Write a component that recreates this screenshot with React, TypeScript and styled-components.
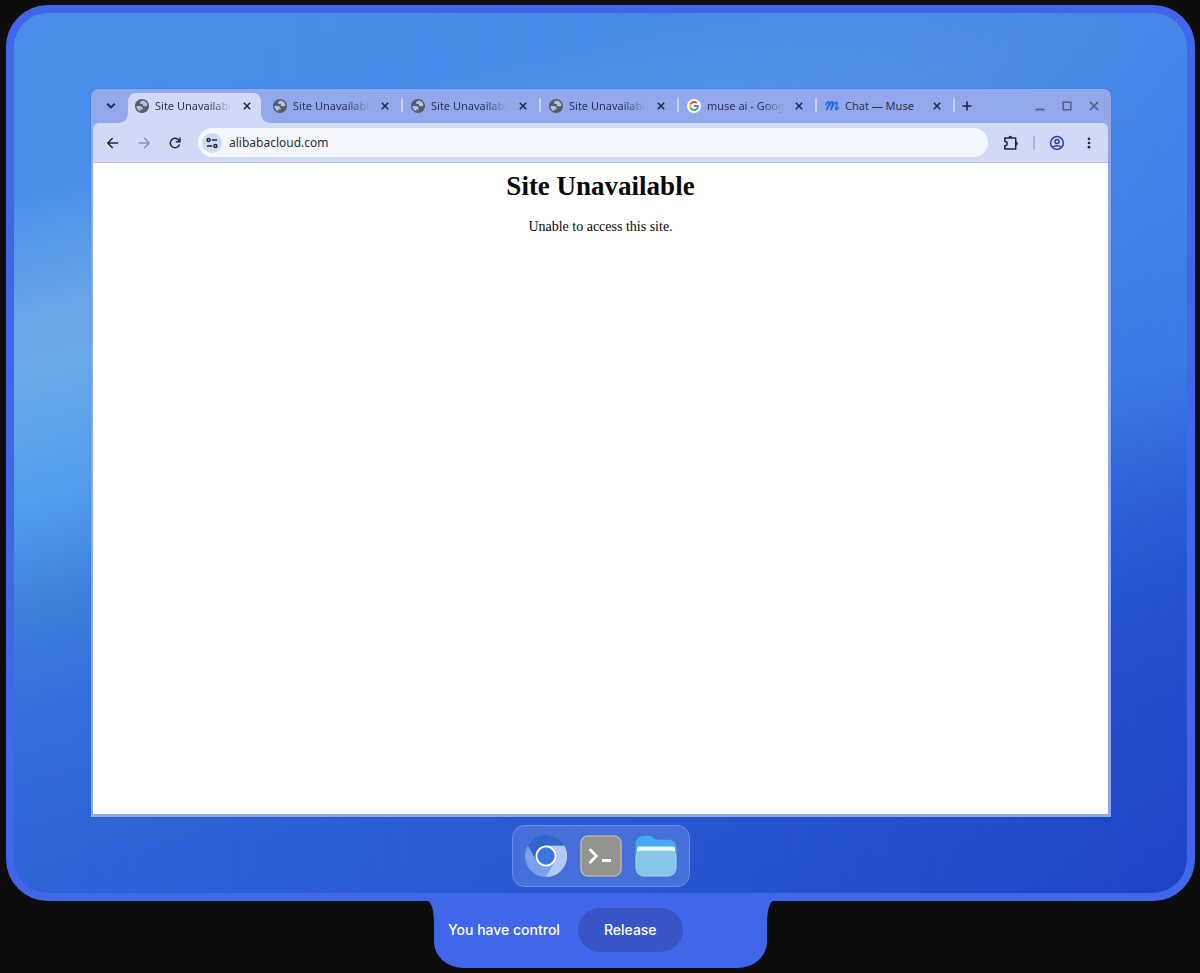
import React from "react";
import styled, { createGlobalStyle, css } from "styled-components";

const GlobalStyle = createGlobalStyle`
  *, *::before, *::after { box-sizing: border-box; }
  body { margin: 0; background: #0d0d0d; }
  button, input { font: inherit; color: inherit; border: 0; padding: 0; margin: 0; background: none; }
  button { cursor: pointer; }
  svg { display: block; flex: none; }
`;

const uiFont = css`
  font-family: "Noto Sans", "Liberation Sans", sans-serif;
`;

const Page = styled.main`
  min-height: 100vh;
  display: flex;
  flex-direction: column;
  padding: 5px 5px 5px 6px;
`;

const Desktop = styled.section`
  flex: 1;
  position: relative;
  isolation: isolate;
  display: flex;
  flex-direction: column;
  align-items: center;
  padding: 76px 76px 6px 77px;
  border: 8px solid #4166ea;
  border-radius: 42px;
  background:
    linear-gradient(
      165deg,
      #4a8ae9 0,
      #4787e8 294px,
      #4280e6 494px,
      #3c7be5 639px,
      #346ede 697px,
      #2c5cd6 784px,
      #2653cf 861px,
      #234dcd 958px,
      #1d44c6 1141px
    ) padding-box,
    linear-gradient(#4166ea, #4166ea) border-box;

  &::before {
    content: "";
    position: absolute;
    inset: 0;
    z-index: -1;
    border-radius: 34px;
    background: linear-gradient(
      165deg,
      #4a8eea 0,
      #478eea 171px,
      #69a7e8 297px,
      #69aae8 355px,
      #54a0ee 461px,
      #4b94e8 510px,
      #3f80dc 577px,
      #336fd9 674px,
      #2d62d6 857px
    );
    mask-image: linear-gradient(to right, #000 0, #000 5%, transparent 100%);
  }
`;

const BrowserWindow = styled.article`
  flex: 1;
  align-self: stretch;
  min-height: 320px;
  display: flex;
  flex-direction: column;
  border: solid #93a8e2;
  border-width: 0 3px 3px 2px;
  border-radius: 7px 7px 0 0;
  background: #93a8ec;
  box-shadow: 0 0 2px rgba(20, 50, 140, 0.25);
  ${uiFont}
`;

const TitleBar = styled.header`
  display: flex;
  align-items: center;
  height: 34px;
  padding: 0 4px 0 8px;
  color: #2b3358;
  font-size: 11px;
`;

const IconButton = styled.button<{ $size: number; $color?: string; $fill?: string }>`
  flex: none;
  width: ${(p) => p.$size}px;
  height: ${(p) => p.$size}px;
  display: flex;
  align-items: center;
  justify-content: center;
  border-radius: 50%;
  color: ${(p) => p.$color ?? "#20263c"};
  background: ${(p) => p.$fill ?? "none"};
`;

const TabList = styled.nav`
  display: flex;
  align-self: stretch;
  padding-left: 7px;
`;

const TabItem = styled.div<{ $active?: boolean; $divided?: boolean }>`
  position: relative;
  width: 138px;
  margin-top: 4px;
  padding: 0 11px 4px 7px;
  display: flex;
  align-items: center;

  ${(p) =>
    p.$active &&
    css`
      &::before {
        content: "";
        position: absolute;
        inset: 0 5px 0 0;
        border-radius: 8px 8px 0 0;
        background: #d0daf7;
      }
      &::after {
        content: "";
        position: absolute;
        bottom: 0;
        left: -8px;
        right: -3px;
        height: 8px;
        background:
          radial-gradient(circle at 0 0, transparent 7px, #d0daf7 8px) left / 8px 8px no-repeat,
          radial-gradient(circle at 100% 0, transparent 7px, #d0daf7 8px) right / 8px 8px no-repeat;
      }
    `}

  ${(p) =>
    p.$divided &&
    css`
      &::after {
        content: "";
        position: absolute;
        right: 1px;
        top: 5px;
        width: 2px;
        height: 14px;
        border-radius: 1px;
        background: #c9d5f8;
      }
    `}
`;

const TabLink = styled.a`
  position: relative;
  z-index: 1;
  flex: 1;
  min-width: 0;
  display: flex;
  align-items: center;
  gap: 6px;
  color: inherit;
  text-decoration: none;
`;

const TabTitle = styled.span<{ $fade: boolean }>`
  flex: 1;
  overflow: hidden;
  white-space: nowrap;
  line-height: 18px;
  margin-right: 7px;
  ${(p) => p.$fade && "mask-image: linear-gradient(to right, #000 72%, transparent 100%);"}
`;

const TabClose = styled(IconButton)`
  position: relative;
  z-index: 1;
`;

const WindowControls = styled.div`
  margin-left: auto;
  display: flex;
  gap: 7px;
`;

const Toolbar = styled.form`
  display: flex;
  align-items: center;
  height: 40px;
  padding: 0 9px 0 10px;
  border-bottom: 1px solid #b4c0e0;
  border-radius: 6px 6px 0 0;
  background: #d0daf7;
`;

const NavButtons = styled.div`
  display: flex;
  gap: 11px;
  padding-right: 13px;
`;

const AddressBar = styled.label`
  flex: 1;
  min-width: 0;
  height: 29px;
  display: flex;
  align-items: center;
  gap: 7px;
  padding: 0 4px;
  border-radius: 15px;
  background: #f4f7fd;
`;

const AddressInput = styled.input`
  flex: 1;
  min-width: 0;
  font-size: 12px;
  line-height: 20px;
  color: #2a2e3a;
  outline: none;
`;

const ToolbarActions = styled.div`
  display: flex;
  align-items: center;
  gap: 12px;
  padding-left: 13px;
`;

const ToolbarDivider = styled.span`
  width: 2px;
  height: 14px;
  border-radius: 1px;
  background: #9fb2ee;
`;

const WebPage = styled.section`
  flex: 1;
  padding: 7px;
  background: #fff;
  color: #0a0a0a;
  font-family: "Liberation Serif", serif;
  text-align: center;
`;

const PageHeading = styled.h1`
  margin: 0;
  font-size: 27px;
  line-height: 32px;
`;

const PageText = styled.p`
  margin: 16px 0 0;
  font-size: 14px;
  line-height: 18px;
`;

const Dock = styled.nav`
  display: flex;
  gap: 13px;
  margin-top: 8px;
  padding: 9px 12px;
  border: 1px solid #6f8fe6;
  border-radius: 13px;
  background: #466fda;
`;

const DockButton = styled.button`
  width: 42px;
  height: 42px;
`;

const ControlBar = styled.footer`
  position: relative;
  align-self: center;
  width: 333px;
  height: 67px;
  display: flex;
  align-items: flex-start;
  gap: 18px;
  padding: 7px 14px 0;
  border-radius: 0 0 30px 30px / 0 0 26px 26px;
  background: #4166ea;
  color: #fff;
  font: 500 14px/44px Inter, "Liberation Sans", sans-serif;
`;

const Flare = styled.svg<{ $side: "left" | "right" }>`
  position: absolute;
  top: -1px;
  ${(p) => (p.$side === "left" ? "right: 100%;" : "left: 100%; transform: scaleX(-1);")}
`;

const ControlStatus = styled.span`
  white-space: nowrap;
`;

const ReleaseButton = styled.button`
  height: 44px;
  padding: 0 26px;
  border-radius: 22px;
  background: #3755c5;
`;

const ChevronIcon = () => (
  <svg width="10" height="6" viewBox="0 0 10 6" fill="none" stroke="currentColor" strokeWidth="1.9">
    <path d="M1.2 0.8 5 4.5 8.8 0.8" />
  </svg>
);

const GlobeIcon = () => (
  <svg width="14" height="14" viewBox="2 2 20 20">
    <circle cx="12" cy="12" r="9.5" fill="#b6c0e4" />
    <path
      fill="#565c6c"
      d="M12 2C6.48 2 2 6.48 2 12s4.48 10 10 10 10-4.48 10-10S17.52 2 12 2zM4 12h4.4c3.4 0 4.9 1.7 4.6 5.1H9.5v2.5C6.3 18.5 4 15.5 4 12zm15.9-.9c-.4.9-1.2 1.4-2.4 1.4h-2.2c-1.3 0-2.1-.8-2.1-2.1V9.3H9.500V7.100c0-1.300.8-2.100 2.200-2.100h1.100V4c3.700.4 6.700 3.300 7.100 7.100z"
    />
  </svg>
);

const GoogleIcon = () => (
  <svg width="14" height="14" viewBox="0 0 28 28">
    <circle cx="14" cy="14" r="14" fill="#fff" />
    <g fill="none" strokeWidth="3.6">
      <path d="M7 10A8 8 0 0 1 19.7 8.3" stroke="#ea4335" />
      <path d="M7 18A8 8 0 0 1 7 10" stroke="#fbbc05" />
      <path d="M19.3 20A8 8 0 0 1 7 18" stroke="#34a853" />
      <path d="M14 14H22A8 8 0 0 1 19.3 20" stroke="#4285f4" />
    </g>
  </svg>
);

const MuseIcon = () => (
  <svg width="14" height="14" viewBox="0 0 14 14" fill="none" strokeLinecap="round" strokeLinejoin="round">
    <path
      d="M0.9 5.3C2 3 4.300 1.800 4.300 4.300L1.800 10.500C3.800 6 7.300 1 8 3.500C8.200 5 6.300 8 6 10.500C7.800 5.500 11.200 1.500 12 4C12.200 6 9.900 9.500 11 10.300C11.900 10.700 12.800 9.500 13.200 8.500"
      stroke="#2d6bdc"
      strokeWidth="1.8"
    />
  </svg>
);

const CrossIcon = ({ size = 8, weight = 1.5 }: { size?: number; weight?: number }) => (
  <svg width={size} height={size} viewBox="0 0 8 8" stroke="currentColor" strokeWidth={weight}>
    <path d="M0.8 0.8 7.2 7.2M7.2 0.8 0.8 7.2" />
  </svg>
);

const ArrowIcon = ({ forward }: { forward?: boolean }) => (
  <svg width="12" height="12" viewBox="0 0 12 12" fill="none" stroke="currentColor" strokeWidth="1.5">
    <path d={forward ? "M0.7 6H11M6.3 1 11.2 6 6.3 11" : "M11.3 6H1M5.7 1 0.8 6 5.7 11"} />
  </svg>
);

const ReloadIcon = () => (
  <svg width="12" height="12" viewBox="0 0 12 12" fill="none" stroke="currentColor" strokeWidth="1.5">
    <path d="M10.5 7.5A4.7 4.7 0 1 1 9.8 3.2L10.8 4.5" />
    <path d="M11 0.5V4.7H6.8" />
  </svg>
);

const SiteInfoIcon = () => (
  <svg width="12" height="12" viewBox="0 0 12 12" fill="none" stroke="currentColor" strokeWidth="1.5">
    <circle cx="2.6" cy="3" r="1.5" />
    <path d="M5.8 3H11M1 9H6.2" />
    <circle cx="9.4" cy="9" r="1.5" />
  </svg>
);

const PuzzleIcon = () => (
  <svg width="16" height="16" viewBox="0 0 16 16" fill="none" stroke="currentColor" strokeWidth="1.5" strokeLinejoin="round">
    <path d="M1.8 3H12.7V14H1.8V10.8C4.9 10.7 4.9 6.3 1.8 6.2Z" />
    <path d="M5.5 2.5A1.8 1.8 0 0 1 9 2.5ZM13.2 6.7A1.8 1.8 0 0 1 13.2 10.2Z" fill="currentColor" strokeWidth="0.5" />
  </svg>
);

const ProfileIcon = () => (
  <svg width="16" height="16" viewBox="0 0 16 16" fill="none" stroke="currentColor" strokeWidth="1.5">
    <circle cx="8" cy="8" r="6.4" />
    <circle cx="8" cy="6.4" r="2" />
    <path d="M3.5 12.3C6 10.2 10 10.2 12.5 12.3" />
  </svg>
);

const MenuIcon = () => (
  <svg width="12" height="12" viewBox="0 0 12 12" fill="currentColor">
    <circle cx="6" cy="1.8" r="1.35" />
    <circle cx="6" cy="6" r="1.35" />
    <circle cx="6" cy="10.2" r="1.35" />
  </svg>
);

const ChromiumIcon = () => (
  <svg width="42" height="42" viewBox="-21 -21 42 42">
    <circle r="21" fill="#7ba2ec" />
    <path d="M0-10.5H18.2A21 21 0 0 1 0 21L9.1 5.2V0H0Z" fill="#b4c8f4" />
    <path d="M-18.2-10.5A21 21 0 0 1 18.2-10.5H0V0L-9.1 5.2Z" fill="#3166c8" />
    <circle r="9.6" fill="#3c76dc" stroke="#fff" strokeWidth="1.9" />
  </svg>
);

const TerminalIcon = () => (
  <svg width="42" height="42" viewBox="0 0 42 42" fill="none">
    <rect x="1" y="1" width="40" height="40" rx="7" fill="#93938f" stroke="#bdb5aa" strokeWidth="1.5" />
    <path d="M10.5 15 16.5 21 10.5 27" stroke="#fff" strokeWidth="3" strokeLinecap="round" strokeLinejoin="round" />
    <path d="M22 25.5H31" stroke="#fff" strokeWidth="3" />
  </svg>
);

const FolderIcon = () => (
  <svg width="42" height="42" viewBox="0 0 42 42">
    <path
      d="M0.5 9A8 8 0 0 1 8.5 0.8H14.5C18 0.8 18.5 4.8 22.5 4.8H33.5A8 8 0 0 1 41.5 12.8V33H0.5Z"
      fill="#47a9f5"
    />
    <path d="M2 13.5A2 2 0 0 1 4 11.5H38A2 2 0 0 1 40 13.5V22H2Z" fill="#e9f5f6" />
    <path
      d="M1 20A4 4 0 0 1 5 16H37A4 4 0 0 1 41 20V33.5A7.5 7.5 0 0 1 33.5 41H8.5A7.5 7.5 0 0 1 1 33.5Z"
      fill="#86c8ea"
      stroke="#9bd5ee"
    />
  </svg>
);

const tabs = [
  { title: "Site Unavailable", Icon: GlobeIcon, active: true, fade: true },
  { title: "Site Unavailable", Icon: GlobeIcon, divided: true, fade: true },
  { title: "Site Unavailable", Icon: GlobeIcon, divided: true, fade: true },
  { title: "Site Unavailable", Icon: GlobeIcon, divided: true, fade: true },
  { title: "muse ai - Google Search", Icon: GoogleIcon, divided: true, fade: true },
  { title: "Chat — Muse", Icon: MuseIcon, divided: true, fade: false },
];

const dockApps = [
  { name: "Chromium", Icon: ChromiumIcon },
  { name: "Terminal", Icon: TerminalIcon },
  { name: "Files", Icon: FolderIcon },
];

const flarePath = "M0 0V1C4 3 6 12 6 24V0Z";

export default function App() {
  return (
    <Page>
      <GlobalStyle />
      <Desktop>
        <BrowserWindow>
          <TitleBar>
            <IconButton $size={20} aria-label="Search tabs">
              <ChevronIcon />
            </IconButton>
            <TabList>
              {tabs.map(({ title, Icon, active, divided, fade }, i) => (
                <TabItem key={i} $active={active} $divided={divided}>
                  <TabLink href="#" aria-current={active ? "page" : undefined}>
                    <Icon />
                    <TabTitle $fade={fade}>{title}</TabTitle>
                  </TabLink>
                  <TabClose $size={16} aria-label="Close tab">
                    <CrossIcon />
                  </TabClose>
                </TabItem>
              ))}
            </TabList>
            <IconButton $size={22} aria-label="New tab">
              <svg width="10" height="10" viewBox="0 0 10 10" stroke="currentColor" strokeWidth="1.6">
                <path d="M5 0.5V9.5M0.5 5H9.5" />
              </svg>
            </IconButton>
            <WindowControls>
              <IconButton $size={20} $color="#555d7c" aria-label="Minimize">
                <svg width="10" height="10" viewBox="0 0 10 10" stroke="currentColor" strokeWidth="1.7">
                  <path d="M0.5 8.5H9.5" />
                </svg>
              </IconButton>
              <IconButton $size={20} $color="#555d7c" aria-label="Maximize">
                <svg width="10" height="10" viewBox="0 0 10 10" fill="none" stroke="currentColor" strokeWidth="1.5">
                  <rect x="1.2" y="1.2" width="7.6" height="7.6" />
                </svg>
              </IconButton>
              <IconButton $size={20} $color="#555d7c" aria-label="Close window">
                <CrossIcon size={10} weight={1.4} />
              </IconButton>
            </WindowControls>
          </TitleBar>
          <Toolbar onSubmit={(e) => e.preventDefault()}>
            <NavButtons>
              <IconButton type="button" $size={20} aria-label="Back">
                <ArrowIcon />
              </IconButton>
              <IconButton type="button" $size={20} $color="#8991ae" aria-label="Forward">
                <ArrowIcon forward />
              </IconButton>
              <IconButton type="button" $size={20} aria-label="Reload">
                <ReloadIcon />
              </IconButton>
            </NavButtons>
            <AddressBar>
              <IconButton type="button" $size={20} $fill="#d0daf7" aria-label="Site information">
                <SiteInfoIcon />
              </IconButton>
              <AddressInput aria-label="Address" defaultValue="alibabacloud.com" />
            </AddressBar>
            <ToolbarActions>
              <IconButton type="button" $size={20} aria-label="Extensions">
                <PuzzleIcon />
              </IconButton>
              <ToolbarDivider />
              <IconButton type="button" $size={20} $color="#2b3f94" aria-label="Profile">
                <ProfileIcon />
              </IconButton>
              <IconButton type="button" $size={20} aria-label="Menu">
                <MenuIcon />
              </IconButton>
            </ToolbarActions>
          </Toolbar>
          <WebPage>
            <PageHeading>Site Unavailable</PageHeading>
            <PageText>Unable to access this site.</PageText>
          </WebPage>
        </BrowserWindow>
        <Dock aria-label="Dock">
          {dockApps.map(({ name, Icon }) => (
            <DockButton key={name} aria-label={name}>
              <Icon />
            </DockButton>
          ))}
        </Dock>
      </Desktop>
      <ControlBar>
        <Flare $side="left" width="6" height="24" viewBox="0 0 6 24" fill="#4166ea">
          <path d={flarePath} />
        </Flare>
        <ControlStatus>You have control</ControlStatus>
        <ReleaseButton>Release</ReleaseButton>
        <Flare $side="right" width="6" height="24" viewBox="0 0 6 24" fill="#4166ea">
          <path d={flarePath} />
        </Flare>
      </ControlBar>
    </Page>
  );
}
